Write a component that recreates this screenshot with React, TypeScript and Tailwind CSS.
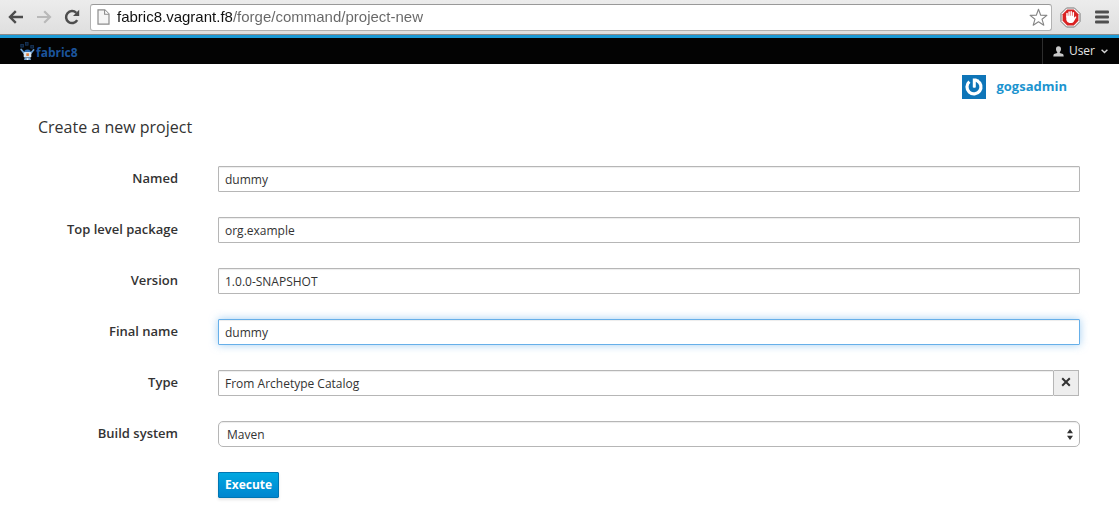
import { useState } from "react";
import type { ReactNode } from "react";

const fieldClass =
  "block h-[26px] w-full min-w-0 rounded-[1px] border border-[#b6b6b6] bg-white px-1.5 text-xs text-[#333333] shadow-[inset_0_1px_1px_rgba(0,0,0,0.075)] outline-none";

function BrowserBar() {
  const [url, setUrl] = useState("fabric8.vagrant.f8/forge/command/project-new");
  return (
    <div className="flex h-[35px] items-center border-b border-[#8a8a8a] bg-linear-to-b from-[#ececec] to-[#dfdfdf] px-2">
      <button type="button" aria-label="Back" className="mr-3 block">
        <svg width="16" height="16" viewBox="0 0 16 16" fill="none" stroke="#4d4d4d" strokeWidth="2.4">
          <path d="M15 8H2.2M7.8 2.2L2 8l5.8 5.8" />
        </svg>
      </button>
      <button type="button" aria-label="Forward" className="mr-3 block">
        <svg width="16" height="16" viewBox="0 0 16 16" fill="none" stroke="#b9b9b9" strokeWidth="2.2">
          <path d="M1 8h12.8M8.2 2.2L14 8l-5.8 5.8" />
        </svg>
      </button>
      <button type="button" aria-label="Reload" className="mr-2.5 block">
        <svg width="16" height="16" viewBox="0 0 16 16">
          <path d="M13.2 11.2A6 6 0 1 1 12.3 3.8" fill="none" stroke="#4d4d4d" strokeWidth="2.5" />
          <path d="M15.2 .8V7H9z" fill="#4d4d4d" />
        </svg>
      </button>
      <div className="flex h-[27px] min-w-0 flex-1 items-center rounded-[3px] border border-[#b2b2b2] border-t-[#999999] bg-white pr-[3px] pl-1.5">
        <svg width="13" height="16" viewBox="0 0 13 16" className="mr-[7px] shrink-0" aria-hidden="true">
          <path d="M1 .8h6.8L12 5v10.2H1z" fill="#f5f5f5" stroke="#8c8c8c" strokeWidth="1.2" />
          <path d="M7.6 1v4.2H12" fill="#ffffff" stroke="#8c8c8c" strokeWidth="1.1" />
        </svg>
        <input
          aria-label="Address"
          value={url}
          onChange={(e) => setUrl(e.target.value)}
          className="min-w-0 flex-1 bg-[linear-gradient(90deg,#111111_115px,#666666_115px)] bg-clip-text font-['Liberation_Sans',Arial,sans-serif] text-[15px] text-transparent caret-black outline-none"
        />
        <button type="button" aria-label="Bookmark this page" className="block">
          <svg width="19" height="19" viewBox="0 0 19 19">
            <path
              d="M9.5 1.3l2.2 5.9 6.2.2-4.9 3.8 1.8 6-5.3-3.5-5.3 3.5 1.8-6L1.1 7.4l6.2-.2z"
              fill="#ffffff"
              stroke="#858585"
              strokeWidth="1.1"
              strokeLinejoin="round"
            />
          </svg>
        </button>
      </div>
      <button type="button" aria-label="Ad blocker" className="ml-2 block">
        <svg width="21" height="21" viewBox="0 0 21 21">
          <path d="M6.5 1h8L20 6.5v8L14.5 20h-8L1 14.5v-8z" fill="#f7f7f7" stroke="#777777" />
          <path d="M7.2 2.6h6.6l4.6 4.6v6.6l-4.6 4.6H7.2l-4.6-4.6V7.2z" fill="#d92323" />
          <path
            d="M7 10V6.4M9.1 9V4.9M11.2 9V4.7M13.3 10V5.7"
            stroke="#ffffff"
            strokeWidth="1.5"
            strokeLinecap="round"
          />
          <path d="M6.3 8.8h7.7v2l1.2-1.3c.8-.4 1.4.3 1 1L13.5 15q-.7.9-2 .9H9.4Q7 15.7 6.3 13z" fill="#ffffff" />
        </svg>
      </button>
      <button type="button" aria-label="Menu" className="mr-0.5 ml-3.5 block">
        <svg width="14" height="14" viewBox="0 0 14 14" fill="#4f4f4f">
          <rect y="0.5" width="14" height="3" rx="1" />
          <rect y="5.5" width="14" height="3" rx="1" />
          <rect y="10.5" width="14" height="3" rx="1" />
        </svg>
      </button>
    </div>
  );
}

function NavBar() {
  return (
    <nav className="flex h-[29px] items-stretch justify-between border-t-3 border-[#1b9ad6] bg-[#030303]">
      <a href="#home" className="ml-5 flex items-end pb-[3px] font-['Open_Sans',sans-serif]">
        <svg width="15" height="19" viewBox="0 0 15 19" aria-hidden="true">
          <g fill="#0b1c33" stroke="#1b3d66" strokeWidth=".7">
            <rect x=".8" y="2.5" width="2.6" height="2.6" />
            <rect x="5.5" y=".6" width="2.6" height="2.6" />
            <rect x="10.8" y="3.5" width="2.6" height="2.6" />
          </g>
          <path d="M1.2 7.5L4 11M13.5 8L11 11" stroke="#6b9fd0" strokeWidth="1.8" strokeLinecap="round" />
          <path d="M4.3 9q3.2-2.8 6.4 0v2H4.3z" fill="#2d6fb4" />
          <rect x="3.7" y="10" width="7.6" height="5.5" rx="1.2" fill="#d6e7f5" />
          <rect x="6.3" y="11.3" width="2.6" height="2.7" fill="#e2803a" />
          <path d="M4.8 15.5h5.4l.8 2.5H4z" fill="#76a5d2" />
          <path d="M6.8 16.2h1.5V18H6.8z" fill="#e9f2fa" />
        </svg>
        <span className="ml-px text-xs leading-4 font-bold text-[#1c559c]">fabric8</span>
      </a>
      <button
        type="button"
        className="flex items-center border-l border-[#2d2d2d] pr-[11px] pl-2.5 text-xs font-medium text-[#e5e5e5]"
      >
        <svg width="11" height="11" viewBox="0 0 11 11" fill="#c9c9c9" aria-hidden="true">
          <path d="M5.5.3c1.7 0 2.6 1.1 2.5 2.8 0 1.5-.5 2.4-1.2 3v.8l3.1 1.2q.7.4.8 2.4H.3q.1-2 .8-2.4l3.1-1.2v-.8C3.5 5.5 3 4.6 3 3.1 2.9 1.4 3.8.3 5.5.3z" />
        </svg>
        <span className="mr-1.5 ml-[5px]">User</span>
        <svg width="7" height="5" viewBox="0 0 7 5" fill="none" stroke="#d5d5d5" strokeWidth="1.4" aria-hidden="true">
          <path d="M.6.7l2.9 2.9L6.4.7" />
        </svg>
      </button>
    </nav>
  );
}

function Row({ label, id, children }: { label: string; id: string; children: ReactNode }) {
  return (
    <div className="grid grid-cols-[140px_minmax(0,1fr)] gap-x-10">
      <label htmlFor={id} className="text-right text-[13px] leading-6 font-semibold text-[#333333]">
        {label}
      </label>
      {children}
    </div>
  );
}

function TextRow({ label, id, initial }: { label: string; id: string; initial: string }) {
  return (
    <Row label={label} id={id}>
      <input id={id} defaultValue={initial} className={fieldClass} />
    </Row>
  );
}

export default function App() {
  return (
    <div className="bg-white font-['Open_Sans',sans-serif] text-[#333333]">
      <BrowserBar />
      <NavBar />
      <main className="pr-[39px] pb-6 pl-[38px]">
        <div className="flex justify-end pt-[11px] pr-[13px]">
          <a href="#gogsadmin" className="flex items-center text-[13px] font-bold text-[#1c94cf]">
            <svg width="24" height="24" viewBox="0 0 24 24" className="mr-2.5" aria-hidden="true">
              <rect width="24" height="24" fill="#0e75b8" />
              <path d="M7.4 6.6A7 7 0 1 0 15.4 5.8" fill="none" stroke="#ffffff" strokeWidth="3.2" />
              <path d="M10.8 3.6h3.2l3.2 1.4-1.6 2.6-1.8-.8v5.4q-1.5 1.2-3 0z" fill="#ffffff" />
            </svg>
            gogsadmin
          </a>
        </div>
        <h1 className="mt-4 mb-[27px] text-base">Create a new project</h1>
        <form className="flex flex-col gap-[25px]" onSubmit={(e) => e.preventDefault()}>
          <TextRow label="Named" id="named" initial="dummy" />
          <TextRow label="Top level package" id="package" initial="org.example" />
          <TextRow label="Version" id="version" initial="1.0.0-SNAPSHOT" />
          <Row label="Final name" id="final-name">
            <input
              id="final-name"
              defaultValue="dummy"
              className="block h-[26px] w-full min-w-0 rounded-[1px] border border-[#66afe9] bg-white px-1.5 text-xs text-[#333333] shadow-[inset_0_1px_1px_rgba(0,0,0,0.075),0_0_8px_rgba(102,175,233,0.6)] outline-none"
            />
          </Row>
          <Row label="Type" id="type">
            <div className="flex pr-px">
              <input id="type" defaultValue="From Archetype Catalog" className={fieldClass} />
              <button
                type="button"
                aria-label="Clear type"
                className="flex h-[26px] w-[25px] shrink-0 items-center justify-center border border-l-0 border-[#b6b6b6] bg-[#eeeeee] pb-0.5"
              >
                <svg width="10" height="10" viewBox="0 0 10 10" stroke="#333333" strokeWidth="2">
                  <path d="M1.2 1.2l7.6 7.6M8.8 1.2L1.2 8.8" />
                </svg>
              </button>
            </div>
          </Row>
          <Row label="Build system" id="build-system">
            <div className="relative">
              <select
                id="build-system"
                className="block h-[26px] w-full appearance-none rounded-[5px] border border-[#b6b6b6] bg-white px-2 pt-0.5 text-xs text-[#333333] shadow-[inset_0_1px_1px_rgba(0,0,0,0.075)] outline-none"
              >
                <option>Maven</option>
                <option>Gradle</option>
              </select>
              <svg
                width="6"
                height="11"
                viewBox="0 0 6 11"
                fill="#333333"
                className="pointer-events-none absolute top-2 right-[7px]"
                aria-hidden="true"
              >
                <path d="M3 0l3 4.3H0zM3 11L0 6.7h6z" />
              </svg>
            </div>
          </Row>
          <div className="flex pl-[180px]">
            <button
              type="submit"
              className="h-[26px] rounded-[1px] border border-[#0076b3] bg-linear-to-b from-[#00a8e1] to-[#0085cf] px-1.5 text-xs font-bold text-white shadow-[0_2px_3px_rgba(0,0,0,0.1)]"
            >
              Execute
            </button>
          </div>
        </form>
      </main>
    </div>
  );
}
